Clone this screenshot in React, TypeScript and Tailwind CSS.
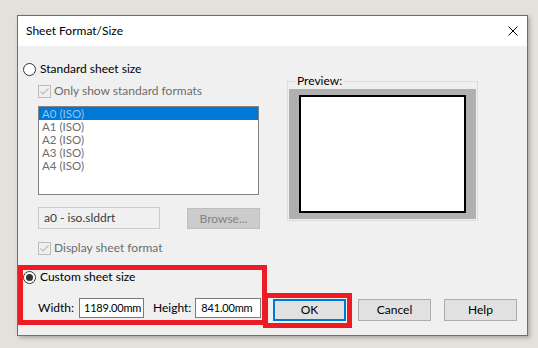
import React from "react";

const Check = () => (
  <svg width="13" height="13" viewBox="0 0 13 13" className="shrink-0">
    <rect x="0.5" y="0.5" width="12" height="12" fill="#f0f0f0" stroke="#bcbcbc" />
    <path d="M2.5 6.5 L5 9 L10.5 3.5" fill="none" stroke="#bcbcbc" strokeWidth="1.2" />
  </svg>
);

const Radio = ({ on }: { on?: boolean }) => (
  <svg width="13" height="13" viewBox="0 0 13 13" className="shrink-0">
    <circle cx="6.5" cy="6.5" r="6" fill="#fff" stroke="#333" />
    {on && <circle cx="6.5" cy="6.5" r="3.5" fill="#333" />}
  </svg>
);

export default function App() {
  const items = ["A0 (ISO)", "A1 (ISO)", "A2 (ISO)", "A3 (ISO)", "A4 (ISO)"];
  return (
    <div className="relative w-[538px] h-[348px] bg-[#e2e2da] pl-[17px] pt-[15px] font-['Lato',sans-serif] text-[12px] leading-[16px] text-black overflow-hidden">
      <div className="w-[511px] h-[321px] border border-[#6f6f6f] bg-[#f0f0f0] flex flex-col shadow-[2px_2px_4px_rgba(0,0,0,0.25)]">
        <div className="h-[30px] bg-white flex items-center justify-between pl-[8px] pr-[9px]">
          <span>Sheet Format/Size</span>
          <svg width="10" height="10" viewBox="0 0 10 10">
            <path d="M0.5 0.5 L9.5 9.5 M9.5 0.5 L0.5 9.5" stroke="#000" strokeWidth="1" />
          </svg>
        </div>
        <div className="flex flex-1">
          <div className="w-[255px] flex flex-col pl-[5px] pt-[15px]">
            <div className="flex items-center gap-[4px] h-[16px]">
              <Radio />
              <span>Standard sheet size</span>
            </div>
            <div className="flex items-center gap-[3px] h-[16px] ml-[15px] mt-[6px] text-[#6d6d6d]">
              <Check />
              <span>Only show standard formats</span>
            </div>
            <div className="ml-[15px] mt-[7px] w-[221px] h-[89px] border border-[#828282] bg-white text-[#6d6d6d] text-[11.5px] flex flex-col">
              {items.map((it, i) => (
                <div
                  key={it}
                  className={
                    i === 0
                      ? "h-[13px] leading-[13px] pl-[3px] bg-[#0078d7] text-[#9cc3ea]"
                      : "h-[13px] leading-[13px] pl-[3px]"
                  }
                >
                  {it}
                </div>
              ))}
            </div>
            <div className="ml-[15px] mt-[12px] flex items-start gap-[27px]">
              <div className="w-[122px] h-[22px] border border-[#cccccc] bg-[#f0f0f0] flex items-center pl-[5px] text-[#3c3c3c]">
                a0 - iso.slddrt
              </div>
              <div className="w-[73px] h-[21px] mt-[1px] border border-[#bfbfbf] bg-[#cccccc] flex items-center justify-center text-[#838383]">
                Browse...
              </div>
            </div>
            <div className="flex items-center gap-[3px] h-[16px] ml-[15px] mt-[11px] text-[#6d6d6d]">
              <Check />
              <span>Display sheet format</span>
            </div>
            <div className="flex items-center gap-[4px] h-[16px] mt-[13px]">
              <Radio on />
              <span>Custom sheet size</span>
            </div>
            <div className="flex items-center ml-[15px] mt-[13px] h-[20px] whitespace-nowrap">
              <span>Width:</span>
              <div className="ml-[5px] w-[65px] h-[20px] border border-[#7a7a7a] bg-white flex items-center pl-[4px] text-[11px] tracking-[-0.2px] overflow-hidden">
                1189.00mm
              </div>
              <span className="ml-[9px]">Height:</span>
              <div className="ml-[4px] w-[66px] h-[20px] border border-[#7a7a7a] bg-white flex items-center pl-[5px] text-[11px] tracking-[-0.2px] overflow-hidden">
                841.00mm
              </div>
            </div>
          </div>
          <div className="flex-1 flex flex-col justify-between pb-[14px] pr-[9px]">
            <div className="relative ml-[14px] mt-[35px] w-[191px] h-[140px] border border-[#dcdcdc] px-[1px] pt-[7px] pb-[1px] flex flex-col">
              <span className="absolute left-[8px] -top-[9px] bg-[#f0f0f0] px-[1px] leading-[16px]">Preview:</span>
              <div className="flex-1 bg-[#b0b0b0] px-[10px] py-[6px] flex">
                <div className="flex-1 bg-white border-2 border-black" />
              </div>
            </div>
            <div className="flex items-center">
              <div className="w-[73px] h-[22px] border-2 border-[#0078d7] bg-[#e1e1e1] flex items-center justify-center">OK</div>
              <div className="ml-[12px] w-[73px] h-[22px] border border-[#adadad] bg-[#e1e1e1] flex items-center justify-center">Cancel</div>
              <div className="ml-[13px] w-[73px] h-[22px] border border-[#adadad] bg-[#e1e1e1] flex items-center justify-center">Help</div>
            </div>
          </div>
        </div>
      </div>
      <div className="absolute left-[18px] top-[265px] w-[249px] h-[60px] border-[5px] border-[#ed1c24]" />
      <div className="absolute left-[263px] top-[293px] w-[89px] h-[35px] border-[5px] border-[#ed1c24]" />
    </div>
  );
}
